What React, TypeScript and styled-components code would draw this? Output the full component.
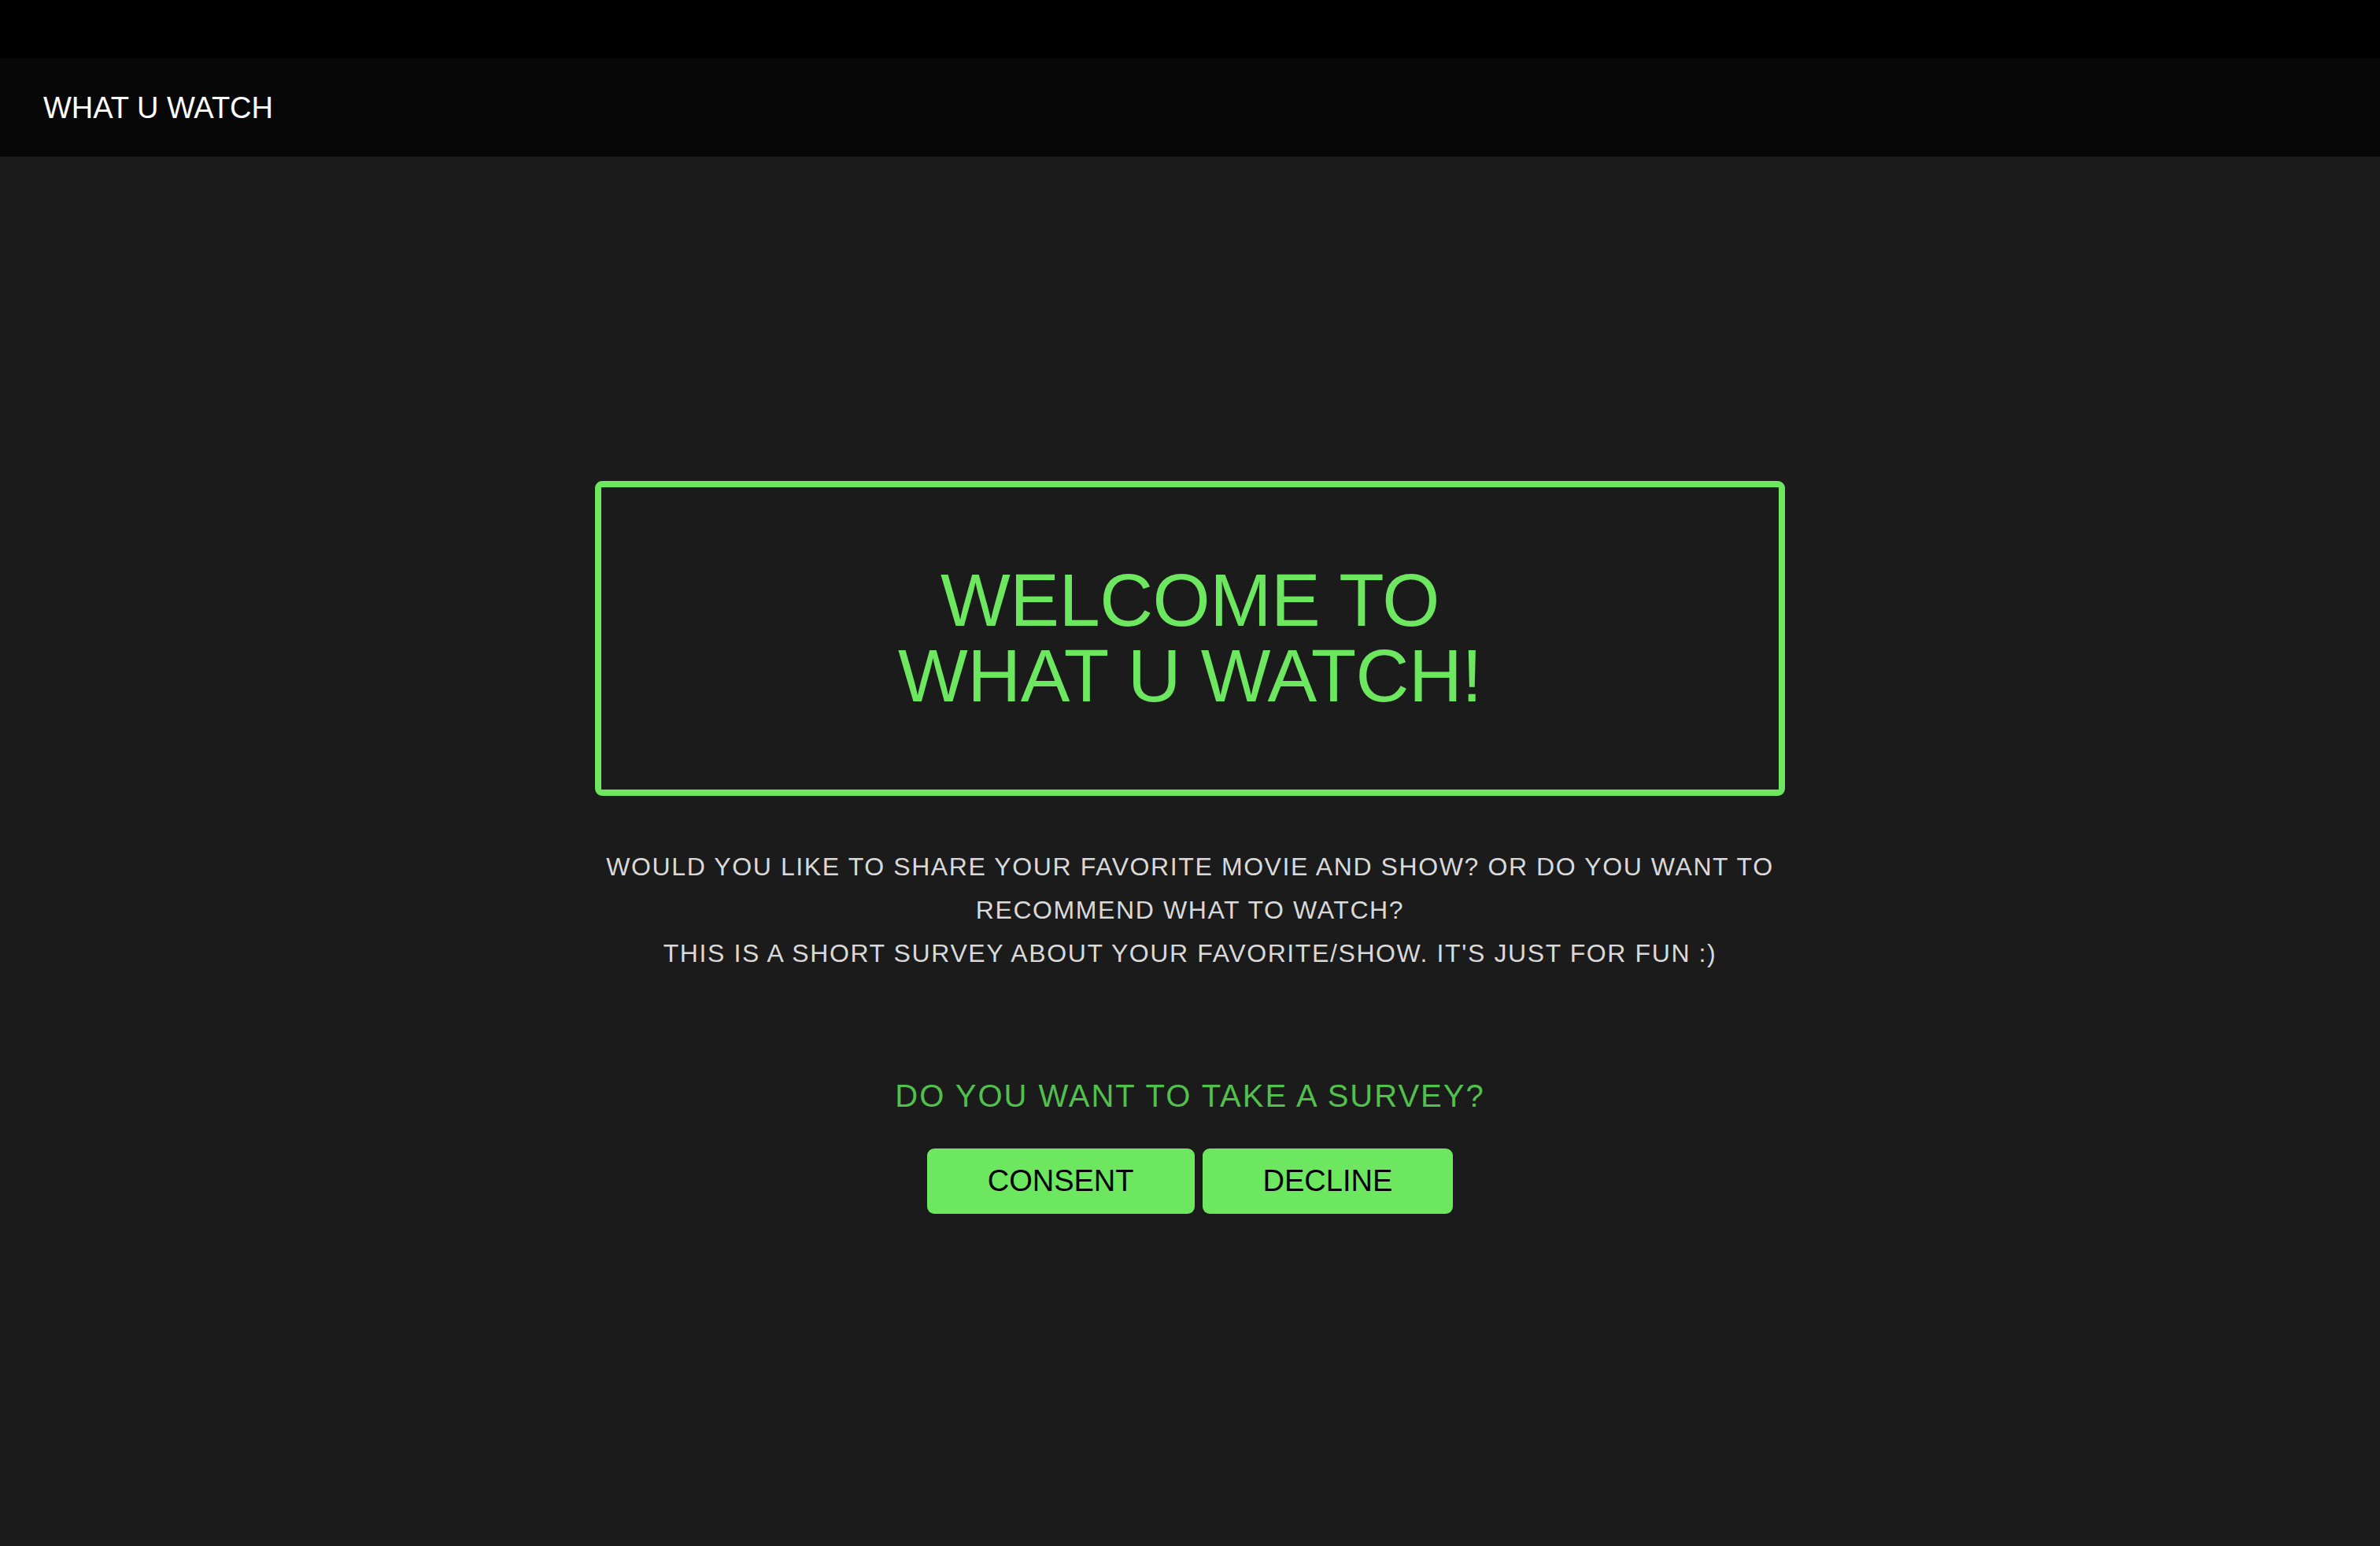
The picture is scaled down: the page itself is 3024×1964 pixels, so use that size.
import React from "react";
import styled, { createGlobalStyle } from "styled-components";

const GlobalStyle = createGlobalStyle`
  html, body {
    margin: 0;
    padding: 0;
    background: #1b1b1b;
  }
  body {
    font-family: "Liberation Sans", Arial, Helvetica, sans-serif;
  }
`;

const Page = styled.div`
  min-height: 1964px;
  background: #1b1b1b;
  display: flex;
  flex-direction: column;
`;

const TopStrip = styled.div`
  height: 74px;
  background: #000000;
`;

const Header = styled.header`
  height: 125px;
  background: #070707;
  display: flex;
  align-items: center;
  padding: 0 55px;
  box-sizing: border-box;
`;

const Brand = styled.div`
  color: #ffffff;
  font-size: 38px;
  line-height: 1;
  padding-top: 1px;
`;

const Main = styled.main`
  display: flex;
  flex-direction: column;
  align-items: center;
  padding-top: 412px;
`;

const WelcomeBox = styled.section`
  width: 50%;
  box-sizing: border-box;
  border: 8px solid #6de660;
  border-radius: 9px;
  padding: 96px 0;
  display: flex;
  justify-content: center;
`;

const WelcomeTitle = styled.h1`
  margin: 0;
  color: #6de660;
  font-weight: 400;
  font-size: 94px;
  line-height: 96px;
  letter-spacing: -0.5px;
  text-align: center;
`;

const Intro = styled.p`
  width: 50%;
  margin: 63px 0 0;
  color: #d9d9d9;
  font-size: 32px;
  line-height: 55px;
  letter-spacing: 1.6px;
  text-align: center;
`;

const Question = styled.h2`
  margin: 130px 0 0;
  color: #52c04c;
  font-weight: 400;
  font-size: 40px;
  line-height: 46px;
  letter-spacing: 2px;
  text-align: center;
`;

const ButtonRow = styled.div`
  display: flex;
  gap: 10px;
  margin-top: 44px;
`;

const ChoiceButton = styled.button`
  border: none;
  background: #6de660;
  color: #000000;
  font-family: "Liberation Sans", Arial, Helvetica, sans-serif;
  font-size: 38px;
  line-height: 45px;
  padding: 19px 77px;
  border-radius: 9px;
  cursor: pointer;
`;

export default function App() {
  return (
    <>
      <GlobalStyle />
      <Page>
        <TopStrip />
        <Header>
          <Brand>WHAT U WATCH</Brand>
        </Header>
        <Main>
          <WelcomeBox>
            <WelcomeTitle>
              WELCOME TO
              <br />
              WHAT U WATCH!
            </WelcomeTitle>
          </WelcomeBox>
          <Intro>
            WOULD YOU LIKE TO SHARE YOUR FAVORITE MOVIE AND SHOW? OR DO YOU WANT TO RECOMMEND WHAT TO WATCH?
            <br />
            THIS IS A SHORT SURVEY ABOUT YOUR FAVORITE/SHOW. IT'S JUST FOR FUN :)
          </Intro>
          <Question>DO YOU WANT TO TAKE A SURVEY?</Question>
          <ButtonRow>
            <ChoiceButton>CONSENT</ChoiceButton>
            <ChoiceButton>DECLINE</ChoiceButton>
          </ButtonRow>
        </Main>
      </Page>
    </>
  );
}
